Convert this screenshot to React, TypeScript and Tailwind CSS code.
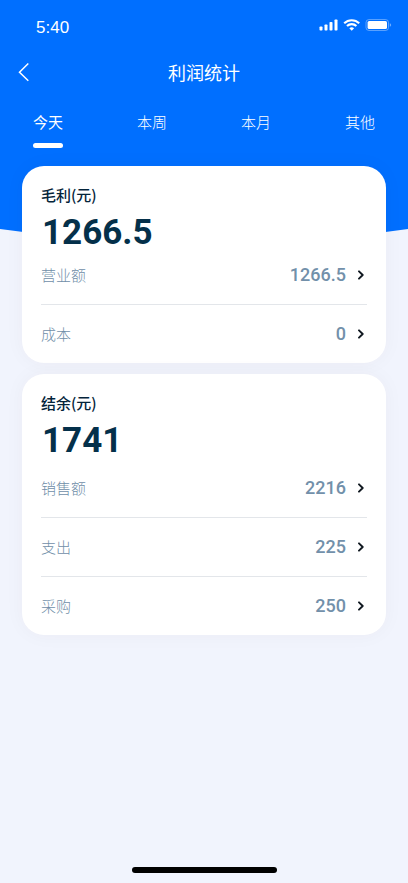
import { useState } from "react";

type Row = { label: string; value: string };

function StatusBar() {
  return (
    <div className="flex h-11 items-center justify-between pt-1.5 pr-4 pl-9 text-white">
      <span className="pt-1.5 font-['Liberation_Sans',Arial,sans-serif] text-[17px] leading-5">5:40</span>
      <svg className="h-3 w-[73px] shrink-0" viewBox="0 0 73 12" fill="none" aria-hidden="true">
        <g fill="currentColor">
          <rect x="0.5" y="7.5" width="3" height="4" rx="0.8" />
          <rect x="5.5" y="5.5" width="3" height="6" rx="0.8" />
          <rect x="10.5" y="3" width="3" height="8.5" rx="0.8" />
          <rect x="15.5" y="0.5" width="3" height="11" rx="0.8" />
        </g>
        <g stroke="currentColor" strokeWidth="2.1">
          <path d="M25.2 4.3a10.6 10.6 0 0 1 15 0" />
          <path d="M28 7.1a6.6 6.6 0 0 1 9.4 0" />
        </g>
        <path d="M32.7 11.8 30.3 9.3a3.5 3.5 0 0 1 4.8 0z" fill="currentColor" />
        <rect x="47" y="0.5" width="22.5" height="11" rx="3" stroke="currentColor" strokeOpacity="0.35" />
        <rect x="48.6" y="2" width="19.4" height="8" rx="1.6" fill="currentColor" />
        <path d="M70.8 4.2v3.6c.8-.3 1.3-1 1.3-1.8s-.5-1.5-1.3-1.8z" fill="currentColor" fillOpacity="0.45" />
      </svg>
    </div>
  );
}

function StatCard({ title, total, rows, listClass }: { title: string; total: string; rows: Row[]; listClass: string }) {
  return (
    <section className="rounded-[22px] bg-white px-[19px] pt-[18px] shadow-[0_0_20px_rgba(80,60,60,0.04)]">
      <h2 className="text-[15px] leading-[22px] font-medium text-[#04243a]">{title}</h2>
      <p className="mt-[7px] pl-px font-[Roboto,sans-serif] text-[35px] leading-10 font-bold text-[#04304a]">{total}</p>
      <ul className={`divide-y divide-[#e3e6ea] ${listClass}`}>
        {rows.map((row) => (
          <li key={row.label}>
            <button type="button" className="flex w-full items-center py-4 text-left leading-[26px]">
              <span className="flex-1 text-[15px] font-light text-[#6f8ea8]">{row.label}</span>
              <span className="font-[Roboto,sans-serif] text-[18px] font-medium text-[#7290aa]">{row.value}</span>
              <svg className="mr-[3px] ml-3 h-2.5 w-1.5" viewBox="0 0 6 10" fill="none" stroke="#101820" strokeWidth="1.9" aria-hidden="true">
                <path d="M1 1.3 4.7 5 1 8.7" strokeLinecap="round" strokeLinejoin="round" />
              </svg>
            </button>
          </li>
        ))}
      </ul>
    </section>
  );
}

const tabs = ["今天", "本周", "本月", "其他"];

export default function App() {
  const [active, setActive] = useState("今天");
  return (
    <div className="flex min-h-screen flex-col bg-[#f1f4fd] font-['Noto_Sans_CJK_SC',sans-serif]">
      <header className="bg-[#006fff] pb-[81px] text-white">
        <StatusBar />
        <div className="grid h-14 grid-cols-[1fr_auto_1fr] items-center px-[18px]">
          <button type="button" aria-label="返回" className="w-fit">
            <svg className="h-5 w-3" viewBox="0 0 12 20" fill="none" stroke="currentColor" strokeWidth="1.5" aria-hidden="true">
              <path d="M10.3 1.5 1.5 10.2 10.3 18.8" />
            </svg>
          </button>
          <h1 className="text-[18px] leading-6">利润统计</h1>
        </div>
        <nav className="flex justify-between px-[33px] pt-[11px]">
          {tabs.map((tab) => (
            <button
              key={tab}
              type="button"
              onClick={() => setActive(tab)}
              className={`flex flex-col items-center text-[15px] leading-[22px] ${tab === active ? "" : "font-light"}`}
            >
              {tab}
              <span className={`mt-2.5 h-[5px] w-[30px] rounded-full ${tab === active ? "bg-white" : ""}`} />
            </button>
          ))}
        </nav>
      </header>
      <svg className="h-4 w-full" viewBox="0 0 408 16" preserveAspectRatio="none" aria-hidden="true">
        <path d="M0 0Q204 30 408 0Z" fill="#006fff" />
      </svg>
      <main className="-mt-[79px] flex flex-col gap-[11px] px-[22px]">
        <StatCard
          title="毛利(元)"
          total="1266.5"
          listClass="-mt-[7px]"
          rows={[
            { label: "营业额", value: "1266.5" },
            { label: "成本", value: "0" },
          ]}
        />
        <StatCard
          title="结余(元)"
          total="1741"
          listClass="-mt-0.5"
          rows={[
            { label: "销售额", value: "2216" },
            { label: "支出", value: "225" },
            { label: "采购", value: "250" },
          ]}
        />
      </main>
      <footer className="mt-auto flex justify-center pt-8 pb-2.5">
        <span className="h-1.5 w-[145px] rounded-full bg-black" />
      </footer>
    </div>
  );
}
